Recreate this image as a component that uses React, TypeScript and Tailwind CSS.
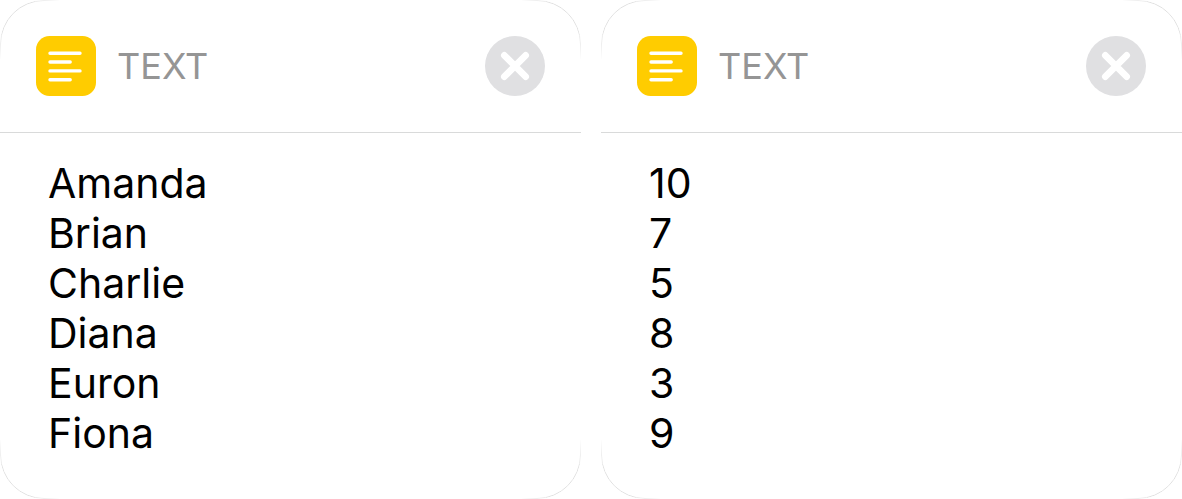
function TextIcon() {
  return (
    <svg viewBox="0 0 60 60" className="size-15 shrink-0" aria-hidden="true">
      <rect width="60" height="60" rx="13.5" fill="#ffcc00" />
      <path d="M14 17.2H44M14 26H34.2M14 34.9H44M14 43.7H34.2" stroke="#fff" strokeWidth="3.4" strokeLinecap="round" />
    </svg>
  );
}

function TextCard({ id, lines }: { id: string; lines: string[] }) {
  return (
    <section aria-labelledby={id} className="relative min-w-0 flex-1 bg-white">
      {/* Outline that fades out away from each rounded corner */}
      <div
        aria-hidden="true"
        className="pointer-events-none absolute inset-0 rounded-[44px] border border-[#e0e0e0] [mask-image:radial-gradient(circle_at_0_0,#000_30px,transparent_60px),radial-gradient(circle_at_100%_0,#000_30px,transparent_60px),radial-gradient(circle_at_0_100%,#000_30px,transparent_60px),radial-gradient(circle_at_100%_100%,#000_30px,transparent_60px)]"
      />
      <header className="flex items-center border-b border-[#d9dada] p-9">
        <TextIcon />
        <h2 id={id} className="ml-[21px] text-[36px] leading-[60px] text-[#959595]">TEXT</h2>
        <button type="button" aria-label="Remove text" className="ml-auto size-15 rounded-full bg-[#e0e0e2]">
          <svg viewBox="0 0 60 60" className="size-15" aria-hidden="true">
            <path d="M19.3 19.3L40.7 40.7M40.7 19.3L19.3 40.7" stroke="#fff" strokeWidth="6.6" strokeLinecap="round" />
          </svg>
        </button>
      </header>
      <ul className="px-12 pt-[25px] pb-[41px] text-[41px] leading-[50px] text-black">
        {lines.map((line) => <li key={line}>{line}</li>)}
      </ul>
    </section>
  );
}

export default function App() {
  return (
    <main className="flex items-start gap-5 bg-white font-['Inter',sans-serif]">
      <TextCard id="names" lines={["Amanda", "Brian", "Charlie", "Diana", "Euron", "Fiona"]} />
      <TextCard id="scores" lines={["10", "7", "5", "8", "3", "9"]} />
    </main>
  );
}
